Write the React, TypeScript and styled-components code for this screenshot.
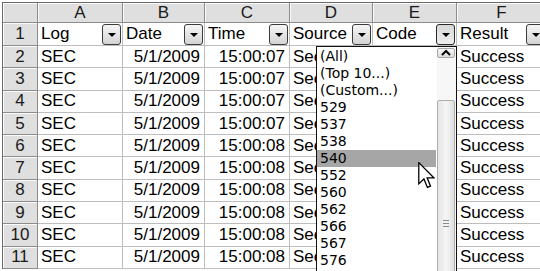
import React from 'react';
import styled, { createGlobalStyle } from 'styled-components';

const Global = createGlobalStyle`
  html, body { margin: 0; padding: 0; background: #fff; overflow: hidden; }
  #root { width: 540px; height: 271px; }
`;

const Frame = styled.div`
  position: relative;
  width: 540px;
  height: 271px;
  overflow: hidden;
  background: #fff;
  padding: 2px 0 0 2px;
  box-sizing: border-box;
`;

const Sheet = styled.div`
  display: grid;
  grid-template-columns: 35px 85px 82px 85px 83px 84px 90px;
  grid-template-rows: 20px 23px repeat(10, 22.3px);
  border-left: 1px solid #6a6a6a;
  border-top: 1px solid #6a6a6a;
  font-family: "Liberation Sans", Arial, sans-serif;
  font-size: 17px;
  color: #000;
`;

const HeadCell = styled.div`
  box-sizing: border-box;
  background: #dfdfdf;
  border-right: 1px solid #8c8c8c;
  border-bottom: 1px solid #8c8c8c;
  box-shadow: inset 1px 1px 0 #fbfbfb;
  display: flex;
  align-items: center;
  justify-content: center;
  color: #1a1a1a;
`;

const Cell = styled.div<{ $align?: 'left' | 'right' }>`
  box-sizing: border-box;
  border-right: 1px solid #bdbdbd;
  border-bottom: 1px solid #bdbdbd;
  display: flex;
  align-items: center;
  justify-content: ${(p) => (p.$align === 'right' ? 'flex-end' : 'flex-start')};
  padding: 0 4px 0 3px;
  white-space: nowrap;
  overflow: hidden;
`;

const FieldCell = styled.div`
  box-sizing: border-box;
  border-right: 1px solid #bdbdbd;
  border-bottom: 1px solid #bdbdbd;
  display: flex;
  align-items: center;
  padding: 0 1px 0 3px;
  white-space: nowrap;
  overflow: hidden;
`;

const FieldLabel = styled.span`
  flex: 1;
  overflow: hidden;
`;

const FilterBtn = styled.span<{ $open?: boolean }>`
  flex: none;
  width: 19px;
  height: 21px;
  box-sizing: border-box;
  border: 1px solid ${(p) => (p.$open ? '#2a2a2a' : '#3c3c3c')};
  border-radius: 3px;
  background: ${(p) =>
    p.$open ? 'linear-gradient(#d9d9d9, #eeeeee)' : 'linear-gradient(#f6f6f6, #d4d4d4)'};
  display: flex;
  align-items: center;
  justify-content: center;
  &::after {
    content: '';
    width: 0;
    height: 0;
    border-left: 4px solid transparent;
    border-right: 4px solid transparent;
    border-top: 4px solid #000;
    margin-top: 1px;
  }
`;

const DropList = styled.div`
  position: absolute;
  left: 316px;
  top: 46px;
  width: 141px;
  height: 240px;
  box-sizing: border-box;
  border: 1px solid #101010;
  background: #fff;
  display: flex;
  font-family: "DejaVu Sans", Tahoma, sans-serif;
  font-size: 14px;
  color: #000;
`;

const Items = styled.div`
  flex: 1;
  padding: 1px 1px 0 0;
  display: flex;
  flex-direction: column;
`;

const Item = styled.div<{ $hl?: boolean }>`
  height: 17px;
  line-height: 17px;
  padding-left: 3px;
  background: ${(p) => (p.$hl ? '#a6a6a6' : 'transparent')};
  white-space: nowrap;
`;

const ScrollBar = styled.div`
  width: 19px;
  display: flex;
  flex-direction: column;
  padding: 1px 1px 0 0;
  box-sizing: border-box;
  background: #f7f7f7;
`;

const ScrollBtn = styled.div`
  height: 18px;
  box-sizing: border-box;
  border: 1px solid #a8a8a8;
  border-radius: 2px;
  background: linear-gradient(#f8f8f8, #dcdcdc);
  display: flex;
  align-items: center;
  justify-content: center;
`;

const Thumb = styled.div`
  margin-top: 42px;
  height: 250px;
  box-sizing: border-box;
  border: 1px solid #aeaeae;
  border-radius: 2px;
  background: linear-gradient(to right, #e4e4e4, #f6f6f6 50%, #dedede);
  display: flex;
  justify-content: center;
  padding-top: 119px;
`;

const Grip = styled.div`
  width: 6px;
  height: 7px;
  background: repeating-linear-gradient(#8a8a8a 0 1px, transparent 1px 3px);
`;

const Cursor = styled.svg`
  position: absolute;
  left: 418px;
  top: 162px;
`;

const headers = ['A', 'B', 'C', 'D', 'E', 'F'];
const fields = ['Log', 'Date', 'Time', 'Source', 'Code', 'Result'];
const times = ['07', '07', '07', '07', '08', '08', '08', '08', '08', '08'];
const listItems = ['(All)', '(Top 10...)', '(Custom...)', '529', '537', '538', '540', '552', '560', '562', '566', '567', '576'];

export default function App() {
  return (
    <>
      <Global />
      <Frame>
        <Sheet>
          <HeadCell />
          {headers.map((h) => (
            <HeadCell key={h}>{h}</HeadCell>
          ))}
          <HeadCell>1</HeadCell>
          {fields.map((f, i) => (
            <FieldCell key={f}>
              <FieldLabel>{f}</FieldLabel>
              <FilterBtn $open={i === 4} />
            </FieldCell>
          ))}
          {times.map((t, i) => (
            <React.Fragment key={i}>
              <HeadCell>{i + 2}</HeadCell>
              <Cell>SEC</Cell>
              <Cell $align="right">5/1/2009</Cell>
              <Cell $align="right">15:00:{t}</Cell>
              <Cell>Security</Cell>
              <Cell />
              <Cell>Success</Cell>
            </React.Fragment>
          ))}
        </Sheet>
        <DropList>
          <Items>
            {listItems.map((it) => (
              <Item key={it} $hl={it === '540'}>
                {it}
              </Item>
            ))}
          </Items>
          <ScrollBar>
            <ScrollBtn>
              <svg width="10" height="7" viewBox="0 0 10 7">
                <path d="M1 6 L5 2 L9 6" fill="none" stroke="#000" strokeWidth="2" />
              </svg>
            </ScrollBtn>
            <Thumb>
              <Grip />
            </Thumb>
          </ScrollBar>
        </DropList>
        <Cursor width="17" height="27" viewBox="0 0 13 21">
          <path
            d="M0.5 0.5 L0.5 17 L4.5 13.2 L7.2 19.8 L9.6 18.8 L7 12.3 L12.2 12.3 Z"
            fill="#fff"
            stroke="#000"
            strokeWidth="1"
            strokeLinejoin="miter"
          />
        </Cursor>
      </Frame>
    </>
  );
}
